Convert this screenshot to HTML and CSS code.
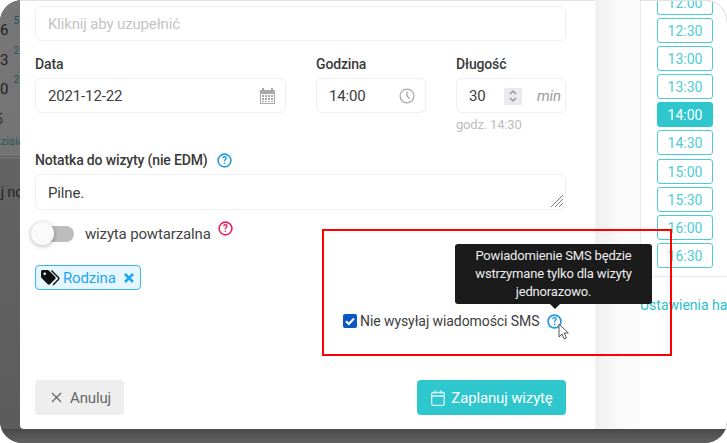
FILE: index.html
```html
<!DOCTYPE html>
<html lang="pl">
<head>
<meta charset="utf-8">
<title>Zaplanuj wizytę</title>
<link rel="stylesheet" href="styles.css">
</head>
<body>
<div class="screen">
  <div class="stage">
    <div class="backdrop">
      <div class="num">6<sup>5</sup></div>
      <div class="num">3<sup>2</sup></div>
      <div class="num">0<sup>2</sup></div>
      <div class="num partial">5</div>
      <div class="today">dzisiaj</div>
      <div class="rule"></div>
      <div class="note">Dodaj no</div>
    </div>
    <main class="modal">
      <div class="input first"><span class="placeholder">Kliknij aby uzupełnić</span></div>
      <div class="fields">
        <div class="field date">
          <label class="label">Data</label>
          <div class="input"><span>2021-12-22</span>
            <svg class="ico" width="15" height="16" viewBox="0 0 15 16"><path fill="#a9a9a9" d="M2 0h2v2h7V0h2v2h2v14H0V2h2zM1 6v9h13V6z"/><path fill="#a9a9a9" d="M2 7h2v2H2zM5 7h2v2H5zM8 7h2v2H8zM11 7h2v2h-2zM2 10h2v2H2zM5 10h2v2H5zM8 10h2v2H8zM11 10h2v2h-2zM2 13h2v1H2zM5 13h2v1H5zM8 13h2v1H8zM11 13h2v1h-2z"/></svg>
          </div>
        </div>
        <div class="field time">
          <label class="label">Godzina</label>
          <div class="input"><span>14:00</span>
            <svg class="ico" width="16" height="16" viewBox="0 0 16 16" fill="none" stroke="#a9a9a9" stroke-width="1.3"><circle cx="8" cy="8" r="6.9"/><path d="M8 3.5V8l2.6 2.8"/></svg>
          </div>
        </div>
        <div class="field length">
          <label class="label">Długość</label>
          <div class="input num-input"><span class="val">30</span>
            <span class="spin"><svg width="8" height="14" viewBox="0 0 8 14" fill="none" stroke="#8a8a92" stroke-width="1.2"><path d="M1 5l3-3 3 3M1 9l3 3 3-3"/></svg></span>
            <em class="unit">min</em>
          </div>
          <div class="hint">godz. 14:30</div>
        </div>
      </div>
      <div class="note-head">
        <label class="label">Notatka do wizyty (nie EDM)</label>
        <svg class="help" width="15" height="15" viewBox="0 0 15 15"><circle cx="7.5" cy="7.5" r="6.4" fill="none" stroke="#1e9be0" stroke-width="1.6"/><text x="7.5" y="11" class="qm" fill="#1e9be0">?</text></svg>
      </div>
      <div class="input area"><span>Pilne.</span>
        <svg class="grip" width="14" height="14" viewBox="0 0 14 14" stroke="#777" stroke-width="1" fill="none"><path d="M1 13L13 1M5 13l8-8M9 13l4-4"/></svg>
      </div>
      <div class="repeat">
        <span class="switch"><span class="track"></span><span class="knob"></span></span>
        <span class="repeat-text">wizyta powtarzalna</span>
        <svg class="help-red" width="15" height="15" viewBox="0 0 15 15"><circle cx="7.5" cy="7.5" r="6.4" fill="none" stroke="#e6235f" stroke-width="1.6"/><text x="7.5" y="11" class="qm" fill="#e6235f">?</text></svg>
      </div>
      <div class="tag">
        <svg width="19" height="16" viewBox="0 0 19 16"><path fill="#111" d="M0 1.500A1.500 1.500 0 0 1 1.500 0h5.200c.5 0 .9.2 1.200.5l6.300 6.300c.6.6.6 1.600 0 2.200L9 14.200c-.6.6-1.600.6-2.200 0L.5 7.900C.2 7.600 0 7.200 0 6.700z"/><circle cx="3.700" cy="3.700" r="1.300" fill="#e6f6ff"/><path fill="none" stroke="#111" stroke-width="1.400" d="M10.500.5l6.900 6.900c.6.6.6 1.400 0 2L12 15"/></svg>
        <span>Rodzina</span>
        <svg class="tag-x" width="10" height="10" viewBox="0 0 10 10" stroke="#1ea7f0" stroke-width="2.600" fill="none"><path d="M1 1l8 8M9 1l-8 8"/></svg>
      </div>
      <div class="sms">
        <span class="check"><svg width="14" height="14" viewBox="0 0 14 14" fill="none" stroke="#fff" stroke-width="2"><path d="M3 7.300l2.800 2.700L11 4.500"/></svg></span>
        <span class="sms-text">Nie wysyłaj wiadomości SMS</span>
        <svg class="help-sms" width="15" height="15" viewBox="0 0 15 15"><circle cx="7.5" cy="7.5" r="6.4" fill="none" stroke="#1e9be0" stroke-width="1.7"/><text x="7.5" y="11" class="qm" fill="#1e9be0">?</text></svg>
      </div>
      <div class="actions">
        <button class="btn cancel"><svg width="11" height="11" viewBox="0 0 11 11" stroke="#666" stroke-width="1.300" fill="none"><path d="M1 1l9 9M10 1l-9 9"/></svg>Anuluj</button>
        <button class="btn submit"><svg width="14" height="16" viewBox="0 0 14 16" fill="none" stroke="#d6f4f6" stroke-width="1.300"><rect x=".7" y="2.500" width="12.600" height="12.800" rx="1.500"/><path d="M.7 6h12.600M4 .5v3M10 .5v3"/></svg>Zaplanuj wizytę</button>
      </div>
    </main>
    <aside class="side">
      <div class="gutter"></div>
      <div class="side-main">
        <div class="slots">
          <div class="slot cut">12:00</div>
          <div class="slot">12:30</div>
          <div class="slot">13:00</div>
          <div class="slot">13:30</div>
          <div class="slot on">14:00</div>
          <div class="slot">14:30</div>
          <div class="slot">15:00</div>
          <div class="slot">15:30</div>
          <div class="slot">16:00</div>
          <div class="slot">16:30</div>
        </div>
        <div class="settings">Ustawienia ha</div>
      </div>
    </aside>
  </div>
  <div class="band"></div>
</div>
<div class="highlight"></div>
<div class="tooltip">Powiadomienie SMS będzie wstrzymane tylko dla wizyty jednorazowo.</div>
<svg class="cursor" width="13" height="19" viewBox="0 0 13 19"><path fill="#fff" stroke="#555" stroke-width="1" d="M1 1v13l3-3 2.200 5 2.300-1-2.200-5h4z"/></svg>
</body>
</html>
```
FILE: styles.css
```css
* { box-sizing: border-box; }
html, body { margin: 0; padding: 0; }
body {
  width: 727px;
  height: 443px;
  overflow: hidden;
  background: #fff;
  font-family: Roboto, "Liberation Sans", sans-serif;
  color: #3a3a3a;
  position: relative;
}
.screen {
  width: 727px;
  height: 443px;
  border-radius: 22px;
  overflow: hidden;
  background: #565656;
  display: flex;
  flex-direction: column;
}
.stage { display: flex; height: 429px; flex: none; }

/* dimmed page on the left */
.backdrop {
  width: 20px;
  flex: none;
  overflow: hidden;
  background: linear-gradient(#777 0, #737373 158px, #636363 159px, #5c5c5c 100%);
  color: #1f1f1f;
  padding-top: 16px;
  display: flex;
  flex-direction: column;
}
.num { font-size: 15px; line-height: 29.5px; height: 29.5px; white-space: nowrap; flex: none; }
.num sup { font-size: 10px; color: #1d5560; vertical-align: 11px; line-height: 0; margin-left: 5px; }
.num.partial { margin-left: -5px; color: #333; font-size: 14px; }
.today { font-size: 11.5px; color: #1e5a5f; line-height: 18px; margin: -2px 0 0 -6px; white-space: nowrap; flex: none; }
.rule { width: 20px; height: 1px; background: #5f5f5f; margin-top: 6px; flex: none; }
.note { font-size: 14px; color: #222; line-height: 18px; margin: 26px 0 0 -32px; white-space: nowrap; flex: none; }

/* modal */
.modal {
  width: 575px;
  flex: none;
  background: #fff;
  padding: 5px 29px 14px 15px;
  display: flex;
  flex-direction: column;
  border-top: 1px solid #e2e2e2;
  border-radius: 0 0 0 4px;
}
.input {
  height: 35px;
  border: 1px solid #eeeef3;
  border-radius: 6px;
  background: #fff;
  padding: 1px 10px 0 12px;
  font-size: 15px;
  letter-spacing: -.15px;
  color: #3d3d3d;
  display: flex;
  align-items: center;
  justify-content: space-between;
}
.placeholder { color: #c4c4c4; }
.fields { display: flex; gap: 30px; margin-top: 14px; }
.field { width: 110px; flex: none; }
.field.date { width: 251px; }
.label { display: block; font-size: 14px; letter-spacing: -.15px; font-weight: 500; line-height: 18px; color: #3a3a3a; margin-bottom: 5px; }
.ico { flex: none; }
.num-input { padding: 1px 0 0 12px; justify-content: flex-start; }
.val { width: 35px; flex: none; }
.spin { width: 18px; height: 17px; background: #e9e9ee; display: flex; align-items: center; justify-content: center; flex: none; }
.unit { font-size: 15px; color: #9b9b9b; margin-left: 15px; }
.hint { font-size: 13px; letter-spacing: -.18px; color: #bdbdbd; line-height: 15px; margin-top: 4px; }
.note-head { display: flex; align-items: center; gap: 9px; margin-top: 19px; }
.help { margin-bottom: 5px; }
.qm { font: 700 10px Roboto, sans-serif; text-anchor: middle; }
.area { height: 36px; position: relative; }
.grip { position: absolute; right: 1px; bottom: 1px; }
.repeat { display: flex; align-items: center; margin-top: 12px; height: 24px; }
.switch { width: 40px; height: 24px; position: relative; flex: none; margin-left: -4px; }
.track { position: absolute; left: 3px; top: 4px; width: 40px; height: 16px; border-radius: 8px; background: #bdbdbd; }
.knob { position: absolute; left: 0; top: 0; width: 23px; height: 23px; border-radius: 50%; background: #fafafa; box-shadow: 0 1px 5px rgba(0,0,0,.3); }
.repeat-text { font-size: 15px; letter-spacing: -.15px; margin-left: 14px; color: #444; }
.help-red { margin: -12px 0 0 7px; }
.tag {
  align-self: flex-start;
  width: 106px;
  height: 25px;
  margin-top: 19px;
  padding: 0 0 0 5px;
  border: 1px solid #3db5f2;
  border-radius: 4px;
  background: #e6f6ff;
  color: #1ea7f0;
  font-size: 15px;
  letter-spacing: -.15px;
  display: flex;
  align-items: center;
  gap: 3px;
}
.tag-x { margin-left: 5px; }
.sms { display: flex; align-items: center; margin: 22px 0 0 308px; height: 18px; }
.check { width: 14px; height: 14px; border-radius: 2px; background: #0b57c4; display: block; flex: none; }
.check svg { display: block; }
.sms-text { font-size: 14px; letter-spacing: -.08px; margin-left: 3px; color: #3d3d3d; white-space: nowrap; }
.help-sms { margin-left: 8px; }
.actions { display: flex; justify-content: space-between; margin-top: auto; }
.btn {
  height: 35px;
  border: 0;
  border-radius: 4px;
  font: 15px Roboto, sans-serif;
  letter-spacing: -.15px;
  display: flex;
  align-items: center;
  padding: 0;
}
.cancel { width: 89px; background: #eeeeee; color: #666; justify-content: center; gap: 8px; padding-left: 3px; }
.submit { width: 149px; background: #2ec7ce; color: #fff; justify-content: center; gap: 6px; padding-left: 1px; }

/* right column */
.side { flex: 1; display: flex; background: #fff; }
.gutter { width: 45px; flex: none; background: linear-gradient(90deg, #f0f0f0, #fafafa 60%, #fbfbfb); }
.side-main { flex: 1; border-right: 1px solid #ddd; border-top: 1px solid #e2e2e2; border-top-right-radius: 22px; overflow: hidden; }
.slots {
  height: 276px;
  border-left: 1px solid #e9e9e9;
  border-bottom: 1px solid #e9e9e9;
  padding: 0 0 0 16px;
  display: flex;
  flex-direction: column;
  gap: 3.1px;
}
.slot {
  width: 56px;
  height: 25px;
  flex: none;
  border: 1px solid #4ccdd3;
  border-radius: 3px;
  color: #4ccdd3;
  font-size: 14px;
  padding-top: 1px;
  display: flex;
  align-items: center;
  justify-content: center;
}
.slot.cut { height: 15px; margin-top: -1px; border-top: 0; border-radius: 0 0 3px 3px; overflow: hidden; align-items: flex-end; line-height: 22px; }
.slot.on { background: #2ec7ce; border-color: #2ec7ce; color: #fff; }
.settings { font-size: 14px; color: #2cc0c8; white-space: nowrap; margin-top: 20px; }
.band { flex: 1; background: linear-gradient(#484848, #626262); }

/* overlays */
.highlight { position: absolute; left: 322px; top: 229px; width: 350px; height: 127px; border: 2px solid #f00; }
.tooltip {
  position: absolute;
  left: 455px;
  top: 244px;
  width: 197px;
  height: 60px;
  padding: 3px 10px;
  background: #1b1b1b;
  border-radius: 3px;
  color: #eee;
  font-size: 13px;
  letter-spacing: -.17px;
  line-height: 18px;
  text-align: center;
}
.tooltip::after {
  content: "";
  position: absolute;
  left: 95px;
  top: 60px;
  border: 5px solid transparent;
  border-top-color: #1b1b1b;
  border-bottom-width: 0;
}
.cursor { position: absolute; left: 558px; top: 323px; }
```
